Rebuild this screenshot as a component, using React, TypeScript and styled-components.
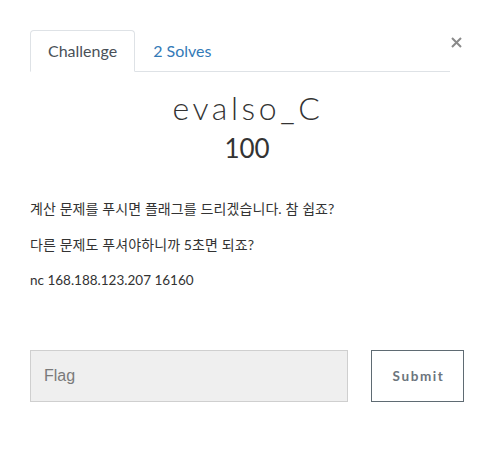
import React from "react";
import styled, { createGlobalStyle } from "styled-components";

const Global = createGlobalStyle`
  html, body { margin: 0; padding: 0; background: #fff; }
  body { font-family: Lato, "Noto Sans CJK KR", sans-serif; color: #212529; }
  * { box-sizing: border-box; }
`;

const Modal = styled.div`
  width: 494px;
  height: 450px;
  padding: 30px 30px 0 30px;
  position: relative;
`;

const Close = styled.button`
  position: absolute;
  top: 37px;
  right: 32px;
  width: 11px;
  height: 11px;
  border: none;
  background: none;
  padding: 0;
  display: flex;
  cursor: pointer;
  svg { display: block; }
`;

const Tabs = styled.div`
  display: flex;
  width: 420px;
  border-bottom: 1px solid #dee2e6;
`;

const Tab = styled.div<{ $active?: boolean }>`
  padding: 9px 17px 10px;
  margin-bottom: -1px;
  font-size: 16px;
  line-height: 21px;
  border: 1px solid ${(p) => (p.$active ? "#dee2e6" : "transparent")};
  border-bottom-color: ${(p) => (p.$active ? "#fff" : "transparent")};
  border-radius: 4px 4px 0 0;
  color: ${(p) => (p.$active ? "#495057" : "#337ab7")};
  background: ${(p) => (p.$active ? "#fff" : "transparent")};
`;

const Title = styled.h3`
  margin: 17px 0 0;
  padding-left: 2px;
  text-align: center;
  font-family: Lato, sans-serif;
  font-weight: 300;
  font-size: 32px;
  letter-spacing: 3.6px;
  line-height: 38px;
  color: #333;
`;

const Value = styled.h4`
  margin: 5px 0 0;
  text-align: center;
  font-family: Lato, sans-serif;
  font-weight: 400;
  font-size: 26px;
  line-height: 32px;
  color: #333;
`;

const Description = styled.div`
  margin-top: 35px;
  font-size: 13.5px;
  line-height: 19px;
  color: #333;
  p { margin: 0 0 17px; }
  p:lang(ko) { font-size: 14px; letter-spacing: 0.1px; }
`;

const Row = styled.div`
  display: flex;
  gap: 23px;
  margin-top: 60px;
`;

const FlagInput = styled.input`
  width: 318px;
  height: 52px;
  background: #efefef;
  border: 1px solid #cfcfcf;
  padding: 0 13px;
  font-family: "Liberation Sans", Arial, sans-serif;
  font-size: 16px;
  color: #555;
  outline: none;
  &::placeholder { color: #7a7a7a; }
`;

const SubmitButton = styled.button`
  width: 93px;
  height: 52px;
  background: #fff;
  border: 1px solid #5f6b73;
  font-family: Lato, sans-serif;
  font-weight: 700;
  font-size: 13.5px;
  letter-spacing: 1.6px;
  padding: 0 0 0 2px;
  color: #6c757d;
  cursor: pointer;
`;

export default function App() {
  return (
    <>
      <Global />
      <Modal>
        <Close aria-label="Close">
          <svg width="11" height="11" viewBox="0 0 11 11">
            <path d="M1 1 L10 10 M10 1 L1 10" stroke="#8a8a8a" strokeWidth="2" />
          </svg>
        </Close>
        <Tabs>
          <Tab $active>Challenge</Tab>
          <Tab>2 Solves</Tab>
        </Tabs>
        <Title>evalso_C</Title>
        <Value>100</Value>
        <Description>
          <p lang="ko">계산 문제를 푸시면 플래그를 드리겠습니다. 참 쉽죠?</p>
          <p lang="ko">다른 문제도 푸셔야하니까 5초면 되죠?</p>
          <p>nc 168.188.123.207 16160</p>
        </Description>
        <Row>
          <FlagInput placeholder="Flag" />
          <SubmitButton>Submit</SubmitButton>
        </Row>
      </Modal>
    </>
  );
}
